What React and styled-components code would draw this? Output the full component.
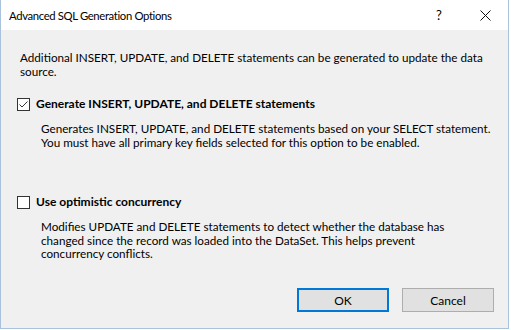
import React from 'react'
import styled, { createGlobalStyle } from 'styled-components'

const GlobalStyle = createGlobalStyle`
  html, body {
    margin: 0;
    padding: 0;
    background: #ffffff;
  }
  body {
    font-family: Lato, "Noto Sans", sans-serif;
    font-size: 12px;
    color: #000;
  }
`

const Window = styled.div`
  width: 507px;
  height: 328px;
  border: 1px solid #a9c2de;
  border-top: none;
  background: #f0f0f0;
  display: flex;
  flex-direction: column;
`

const TitleBar = styled.div`
  height: 30px;
  background: #ffffff;
  display: flex;
  align-items: center;
  padding-left: 8px;
`

const Title = styled.div`
  flex: 1;
  font-size: 11.3px;
  letter-spacing: -0.35px;
`

const TitleButton = styled.div`
  width: 46px;
  height: 30px;
  display: flex;
  align-items: center;
  justify-content: center;
  font-size: 13px;
`

const Body = styled.div`
  display: flex;
  flex-direction: column;
  padding: 21px 0 0 19px;
`

const Text = styled.p`
  margin: 0;
  line-height: 13.5px;
  font-size: 11.7px;
  white-space: nowrap;
`

const OptionRow = styled.label`
  display: flex;
  align-items: center;
  gap: 6px;
  margin-top: ${p => p.top}px;
  margin-left: -3px;
  font-weight: bold;
  font-size: 12px;
  line-height: 14px;
  white-space: nowrap;
`

const Box = styled.span`
  width: 11px;
  height: 11px;
  border: 1px solid #333;
  background: #fff;
  display: flex;
  align-items: center;
  justify-content: center;
`

const Description = styled.div`
  margin-top: ${p => p.top}px;
  padding-left: 21px;
`

const Footer = styled.div`
  margin-top: auto;
  display: flex;
  justify-content: flex-end;
  gap: 13px;
  padding: 0 14px 16px 0;
`

const Button = styled.button`
  width: 92px;
  height: 24px;
  background: #e1e1e1;
  border: ${p => (p.primary ? '2px solid #0078d7' : '1px solid #adadad')};
  font-family: inherit;
  font-size: 12px;
  color: #000;
  padding: 0;
`

function Checkbox({ checked }) {
  return (
    <Box>
      {checked && (
        <svg width="11" height="11" viewBox="0 0 11 11">
          <path d="M1.5 5.5 L4 8 L9.5 2.5" fill="none" stroke="#333" strokeWidth="1" />
        </svg>
      )}
    </Box>
  )
}

export default function App() {
  return (
    <>
      <GlobalStyle />
      <Window>
        <TitleBar>
          <Title>Advanced SQL Generation Options</Title>
          <TitleButton>?</TitleButton>
          <TitleButton>
            <svg width="11" height="11" viewBox="0 0 11 11">
              <path d="M0.5 0.5 L10.5 10.5 M10.5 0.5 L0.5 10.5" stroke="#111" strokeWidth="1" />
            </svg>
          </TitleButton>
        </TitleBar>
        <Body>
          <Text>
            Additional INSERT, UPDATE, and DELETE statements can be generated to update the data
            <br />
            source.
          </Text>
          <OptionRow top={19}>
            <Checkbox checked />
            Generate INSERT, UPDATE, and DELETE statements
          </OptionRow>
          <Description top={11}>
            <Text>
              Generates INSERT, UPDATE, and DELETE statements based on your SELECT statement.
              <br />
              You must have all primary key fields selected for this option to be enabled.
            </Text>
          </Description>
          <OptionRow top={46}>
            <Checkbox />
            Use optimistic concurrency
          </OptionRow>
          <Description top={11}>
            <Text>
              Modifies UPDATE and DELETE statements to detect whether the database has
              <br />
              changed since the record was loaded into the DataSet. This helps prevent
              <br />
              concurrency conflicts.
            </Text>
          </Description>
        </Body>
        <Footer>
          <Button primary>OK</Button>
          <Button>Cancel</Button>
        </Footer>
      </Window>
    </>
  )
}
